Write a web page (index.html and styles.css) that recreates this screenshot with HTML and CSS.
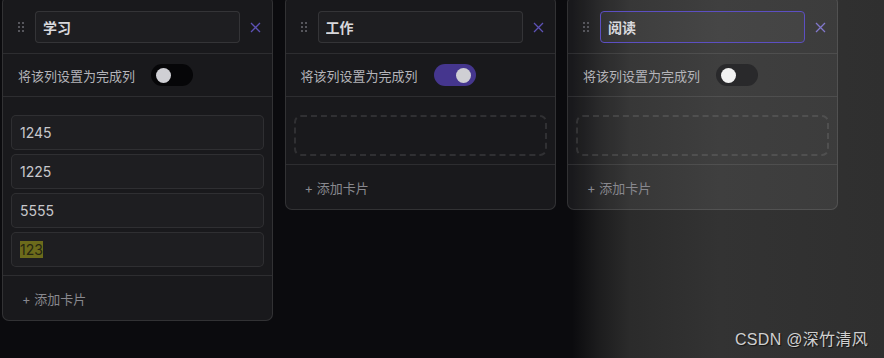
FILE: index.html
```html
<!DOCTYPE html>
<html lang="zh-CN">
<head>
    <meta charset="UTF-8">
    <meta name="viewport" content="width=device-width, initial-scale=1.0">
    <title>看板</title>
    <link rel="stylesheet" href="styles.css">
</head>
<body>
    <div class="board">
        <div class="column">
            <div class="column-header">
                <span class="drag-handle"><i></i><i></i><i></i><i></i><i></i><i></i></span>
                <input class="title-input" type="text" value="学习">
                <button class="close-btn" aria-label="删除列">
                    <svg width="11" height="11" viewBox="0 0 11 11"><path d="M1 1 L10 10 M10 1 L1 10" stroke="currentColor" stroke-width="1.3" fill="none"/></svg>
                </button>
            </div>
            <div class="done-row">
                <span class="done-label">将该列设置为完成列</span>
                <span class="toggle"><span class="knob"></span></span>
            </div>
            <div class="card-list">
                <div class="card">1245</div>
                <div class="card">1225</div>
                <div class="card">5555</div>
                <div class="card"><mark>123</mark></div>
            </div>
            <div class="column-footer">+ 添加卡片</div>
        </div>

        <div class="column">
            <div class="column-header">
                <span class="drag-handle"><i></i><i></i><i></i><i></i><i></i><i></i></span>
                <input class="title-input" type="text" value="工作">
                <button class="close-btn" aria-label="删除列">
                    <svg width="11" height="11" viewBox="0 0 11 11"><path d="M1 1 L10 10 M10 1 L1 10" stroke="currentColor" stroke-width="1.3" fill="none"/></svg>
                </button>
            </div>
            <div class="done-row">
                <span class="done-label">将该列设置为完成列</span>
                <span class="toggle on"><span class="knob"></span></span>
            </div>
            <div class="card-list">
                <div class="drop-zone"></div>
            </div>
            <div class="column-footer">+ 添加卡片</div>
        </div>

        <div class="column">
            <div class="column-header">
                <span class="drag-handle"><i></i><i></i><i></i><i></i><i></i><i></i></span>
                <input class="title-input focused" type="text" value="阅读">
                <button class="close-btn light" aria-label="删除列">
                    <svg width="11" height="11" viewBox="0 0 11 11"><path d="M1 1 L10 10 M10 1 L1 10" stroke="currentColor" stroke-width="1.3" fill="none"/></svg>
                </button>
            </div>
            <div class="done-row">
                <span class="done-label">将该列设置为完成列</span>
                <span class="toggle gray"><span class="knob"></span></span>
            </div>
            <div class="card-list">
                <div class="drop-zone"></div>
            </div>
            <div class="column-footer">+ 添加卡片</div>
        </div>
    </div>

    <div class="watermark">CSDN @深竹清风</div>
</body>
</html>
```

FILE: styles.css
```css
html, body {
    height: 100%;
}
body {
    margin: 0;
    padding: 0 0 0 2px;
    overflow: hidden;
    font-family: Inter, "Noto Sans CJK SC", sans-serif;
    background: linear-gradient(90deg, #0b0b0e 0, #0b0b0e 572px, #1c1c1d 598px, #2b2b2b 630px, #333333 720px, #2f2f2f 884px);
}
.board {
    display: flex;
    align-items: flex-start;
    gap: 11.5px;
    margin-top: -4px;
}
.column {
    width: 271px;
    box-sizing: border-box;
    background: rgba(255, 255, 255, 0.06);
    border: 1px solid rgba(255, 255, 255, 0.11);
    border-radius: 7px;
}
.column-header {
    display: flex;
    align-items: center;
    padding: 14px 11px 10px 15px;
    border-bottom: 1px solid rgba(255, 255, 255, 0.09);
}
.drag-handle {
    display: grid;
    grid-template-columns: 2px 2px;
    gap: 2px;
    width: 6px;
    margin-right: 11px;
}
.drag-handle i {
    display: block;
    width: 2px;
    height: 2px;
    background: #56565c;
}
.title-input {
    flex: 1;
    min-width: 0;
    height: 32px;
    box-sizing: border-box;
    padding: 0 7px;
    font-family: inherit;
    font-size: 14px;
    font-weight: 700;
    color: #d8d8dc;
    background: rgba(255, 255, 255, 0.025);
    border: 1px solid rgba(255, 255, 255, 0.1);
    border-radius: 4px;
    outline: none;
}
.title-input.focused {
    border-color: #5c4fc2;
    background: rgba(255, 255, 255, 0.04);
}
.close-btn {
    display: flex;
    padding: 0;
    margin-left: 10px;
    width: 11px;
    height: 11px;
    border: none;
    background: none;
    color: #5d51b5;
    cursor: pointer;
}
.close-btn.light {
    color: #8278cc;
}
.done-row {
    display: flex;
    align-items: center;
    height: 42px;
    padding: 0 15px;
    border-bottom: 1px solid rgba(255, 255, 255, 0.09);
}
.done-label {
    font-size: 13px;
    color: #b4b4b9;
    margin-right: 16px;
}
.toggle {
    position: relative;
    width: 42px;
    height: 22px;
    border-radius: 11px;
    background: #060608;
}
.toggle .knob {
    position: absolute;
    top: 3.5px;
    left: 5px;
    width: 15px;
    height: 15px;
    border-radius: 50%;
    background: #cfcfd4;
}
.toggle.on {
    background: #45368e;
}
.toggle.on .knob {
    left: 22px;
}
.toggle.gray {
    background: #29292b;
}
.toggle.gray .knob {
    background: #f2f2f2;
}
.card-list {
    display: flex;
    flex-direction: column;
    gap: 4px;
    padding: 18px 8px 8px;
    border-bottom: 1px solid rgba(255, 255, 255, 0.09);
}
.card {
    height: 35px;
    box-sizing: border-box;
    display: flex;
    align-items: center;
    padding: 0 8px;
    font-size: 14px;
    color: #c8c8cc;
    background: rgba(255, 255, 255, 0.025);
    border: 1px solid rgba(255, 255, 255, 0.08);
    border-radius: 5px;
}
.card mark {
    background: #6c6b1b;
    color: #262612;
}
.drop-zone {
    height: 41px;
    box-sizing: border-box;
    border: 2px dashed rgba(255, 255, 255, 0.1);
    border-radius: 7px;
}
.column-footer {
    height: 44px;
    display: flex;
    align-items: center;
    padding: 0 19px;
    font-size: 13px;
    color: #88888e;
}
.watermark {
    position: absolute;
    right: 16px;
    bottom: 8px;
    font-family: "Liberation Sans", "Noto Sans CJK SC", sans-serif;
    font-size: 16px;
    letter-spacing: 0.3px;
    color: #cfcfcf;
    text-shadow: 1px 1px 1px rgba(0, 0, 0, 0.6);
}
```
